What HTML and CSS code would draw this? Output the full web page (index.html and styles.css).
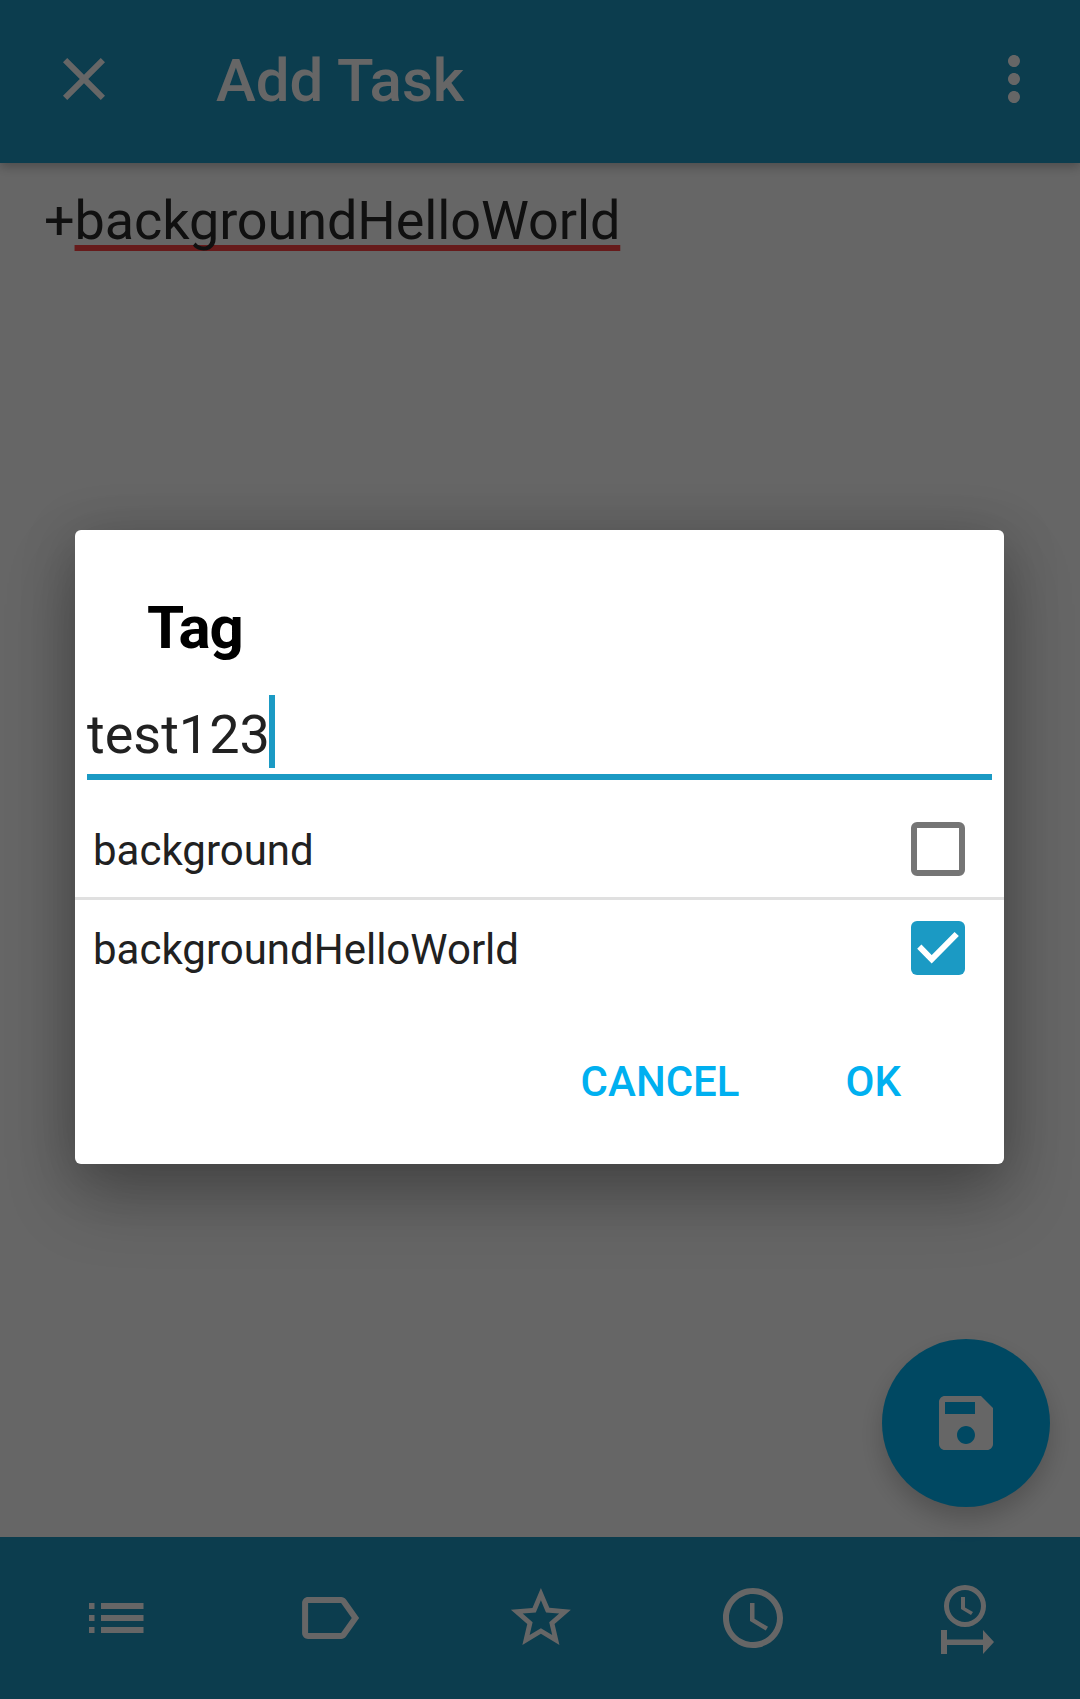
FILE: index.html
```html
<!DOCTYPE html>
<html lang="en">
<head>
  <meta charset="UTF-8" />
  <meta name="viewport" content="width=device-width, initial-scale=1.0"/>
  <title>Add Task</title>
  <link rel="stylesheet" href="styles.css">
</head>
<body>
  <div class="page">
    <header class="toolbar">
      <svg class="icon" viewBox="0 0 24 24"><path d="M19 6.41L17.59 5 12 10.59 6.41 5 5 6.41 10.59 12 5 17.59 6.41 19 12 13.41 17.59 19 19 17.59 13.41 12z"/></svg>
      <h1 class="toolbar-title">Add Task</h1>
      <svg class="icon" viewBox="0 0 24 24"><path d="M12 8c1.1 0 2-.9 2-2s-.9-2-2-2-2 .9-2 2 .9 2 2 2zm0 2c-1.1 0-2 .9-2 2s.9 2 2 2 2-.9 2-2-.9-2-2-2zm0 6c-1.1 0-2 .9-2 2s.9 2 2 2 2-.9 2-2-.9-2-2-2z"/></svg>
    </header>

    <main class="editor">+<span class="misspelled">backgroundHelloWorld</span></main>

    <nav class="bottombar">
      <svg class="icon" viewBox="0 0 72 72"><path d="M17 21h5.500v6H17zM29 21h42.500v6H29zM17 33h5.500v6H17zM29 33h42.500v6H29zM17 45h5.500v6H17zM29 45h42.500v6H29z"/></svg>
      <svg class="icon" viewBox="0 0 24 24"><path transform="translate(1.7 0)" d="M17.630 5.840C17.270 5.330 16.670 5 16 5L5 5.010C3.900 5.010 3 5.900 3 7v10c0 1.100.9 1.990 2 1.990L16 19c.67 0 1.270-.33 1.630-.84L22 12l-4.370-6.160zM16 17H5V7h11l3.550 5L16 17z"/></svg>
      <svg class="icon" viewBox="0 0 24 24"><path transform="translate(.3 0)" d="M22 9.240l-7.190-.62L12 2 9.190 8.630 2 9.240l5.460 4.730L5.820 21 12 17.270 18.180 21l-1.630-7.030L22 9.240zM12 15.400l-3.760 2.270 1-4.280-3.320-2.880 4.380-.38L12 6.100l1.710 4.040 4.380.38-3.320 2.880 1 4.280L12 15.400z"/></svg>
      <svg class="icon" viewBox="0 0 24 24"><g transform="translate(-1 0)"><path d="M11.990 2C6.470 2 2 6.480 2 12s4.470 10 9.990 10C17.520 22 22 17.520 22 12S17.520 2 11.990 2zM12 20c-4.420 0-8-3.580-8-8s3.580-8 8-8 8 3.580 8 8-3.580 8-8 8z"/><path d="M12.500 7H11v6l5.250 3.150.75-1.230-4.500-2.670z"/></g></svg>
      <svg class="icon" viewBox="0 0 72 72">
        <path fill-rule="evenodd" d="M29 3a21 21 0 1 0 0 42a21 21 0 1 0 0-42zM29 8a16 16 0 1 1 0 32a16 16 0 1 1 0-32z"/>
        <path d="M25 15h4v10.500l8 4.500-2 3-10-6z"/>
        <path d="M5 48h6v9.500h36V48l11 12-11 12v-9H11v9H5z"/>
      </svg>
    </nav>

    <button class="fab" type="button">
      <svg class="icon" viewBox="0 0 24 24"><path d="M17 3H5c-1.110 0-2 .9-2 2v14c0 1.100.89 2 2 2h14c1.100 0 2-.9 2-2V7l-4-4zm-5 16c-1.660 0-3-1.340-3-3s1.340-3 3-3 3 1.340 3 3-1.340 3-3 3zm3-10H5V5h10v4z"/></svg>
    </button>

    <div class="scrim">
      <section class="dialog">
        <h2 class="dialog-title">Tag</h2>
        <div class="tag-input">test123<span class="caret"></span></div>

        <div class="tag-row">
          <span class="tag-label">background</span>
          <span class="check"></span>
        </div>
        <div class="tag-divider"></div>
        <div class="tag-row">
          <span class="tag-label">backgroundHelloWorld</span>
          <span class="check checked">
            <svg viewBox="0 0 54 54"><path d="M8.300 25.700L20.700 38.300 45.700 13"/></svg>
          </span>
        </div>

        <div class="dialog-actions">
          <button class="action" type="button">CANCEL</button>
          <button class="action" type="button">OK</button>
        </div>
      </section>
    </div>
  </div>
</body>
</html>
```

FILE: styles.css
```css
* {
  box-sizing: border-box;
}

body {
  margin: 0;
  font-family: Roboto, sans-serif;
  background: #fff;
}

.page {
  position: relative;
  display: flex;
  flex-direction: column;
  height: 1699px;
  overflow: hidden;
}

.icon {
  display: block;
  flex: none;
  width: 72px;
  height: 72px;
  fill: #fff;
}

/* top bar */
.toolbar {
  display: flex;
  align-items: center;
  flex: none;
  height: 163px;
  padding: 0 30px 5px 48px;
  background: #1e98c4;
  box-shadow: 0 4px 10px rgba(0, 0, 0, 0.25);
}

.toolbar-title {
  flex: 1;
  margin: 4px 0 0 96px;
  font-size: 60px;
  font-weight: 500;
  line-height: 70px;
  color: #fff;
}

/* task text */
.editor {
  flex: 1;
  padding: 26px 0 0 44px;
  font-size: 54px;
  line-height: 64px;
  letter-spacing: -0.1px;
  color: #2a2a2a;
}

.misspelled {
  text-decoration: underline #ff4444 6px;
  text-underline-offset: 6px;
  text-decoration-skip-ink: none;
}

/* bottom bar */
.bottombar {
  display: grid;
  grid-template-columns: repeat(5, 1fr);
  justify-items: center;
  align-items: center;
  flex: none;
  height: 162px;
  background: #1e98c4;
}

.fab {
  position: absolute;
  right: 30px;
  bottom: 192px;
  display: flex;
  align-items: center;
  justify-content: center;
  width: 168px;
  height: 168px;
  padding: 0;
  border: none;
  border-radius: 50%;
  background: #00b5f5;
  box-shadow: 0 12px 24px rgba(0, 0, 0, 0.2);
}

/* dimmed layer and dialog */
.scrim {
  position: absolute;
  inset: 0;
  display: flex;
  align-items: center;
  justify-content: center;
  padding: 0 1px 5px 0;
  background: rgba(0, 0, 0, 0.6);
}

.dialog {
  width: 929px;
  height: 634px;
  padding-top: 63px;
  border-radius: 6px;
  background: #fff;
  box-shadow: 0 34px 70px rgba(0, 0, 0, 0.24), 0 8px 56px rgba(0, 0, 0, 0.2);
}

.dialog-title {
  margin: 0 0 0 72px;
  font-size: 60px;
  font-weight: 700;
  line-height: 70px;
  letter-spacing: -1.2px;
  color: #000;
}

.tag-input {
  margin: 32px 12px 0;
  padding-bottom: 6px;
  border-bottom: 6px solid #1b9ac4;
  font-size: 54px;
  line-height: 54px;
  color: #212121;
}

.caret {
  display: inline-block;
  width: 6px;
  height: 73px;
  margin-left: -1px;
  vertical-align: -15px;
  background: #1b9ac4;
}

.tag-row {
  display: flex;
  align-items: center;
  justify-content: space-between;
  height: 96px;
  padding: 0 39px 0 18px;
  font-size: 42px;
  color: #212121;
}

.tag-label {
  padding-top: 3px;
}

.tag-input + .tag-row {
  margin-top: 21px;
}

.tag-divider {
  height: 3px;
  background: #e0e0e0;
}

.check {
  flex: none;
  width: 54px;
  height: 54px;
  border: 6px solid #757575;
  border-radius: 6px;
}

.check.checked {
  border: none;
  background: #1b9ac4;
}

.check svg {
  display: block;
  width: 54px;
  height: 54px;
  fill: none;
  stroke: #fff;
  stroke-width: 6;
}

.dialog-actions {
  display: flex;
  justify-content: flex-end;
  gap: 106px;
  padding: 61px 103px 0 0;
}

.action {
  padding: 0;
  border: none;
  background: none;
  font-family: inherit;
  font-size: 42px;
  font-weight: 500;
  line-height: 50px;
  color: #00b0f0;
}
```
